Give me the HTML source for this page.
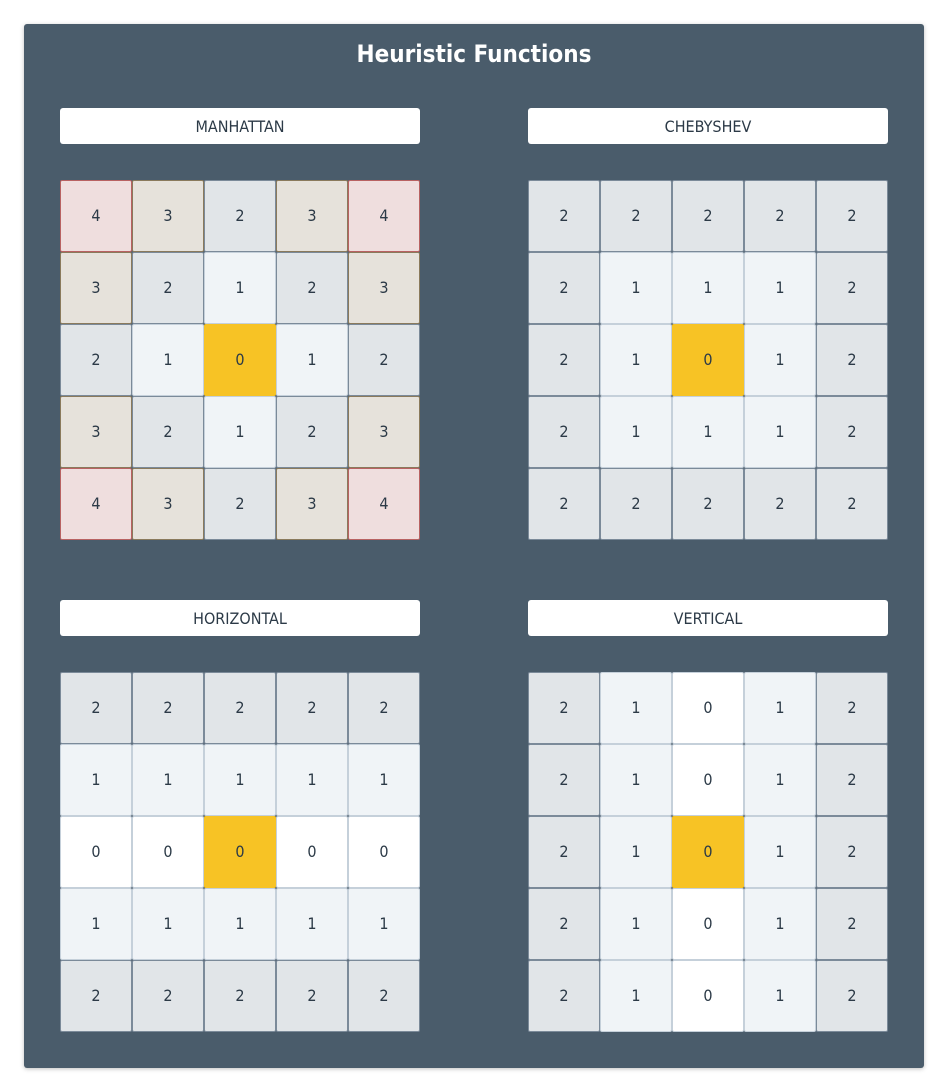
<!DOCTYPE html>
<html><head><meta charset="utf-8"><style>
body{margin:0;background:#fff;width:948px;height:1092px;position:relative;font-family:"DejaVu Sans Condensed","Liberation Sans",sans-serif;}
.panel{position:absolute;left:24px;top:24px;width:900px;height:1044px;background:#4a5c6b;border-radius:3px;box-shadow:0 1px 4px rgba(0,0,0,.25);}
h1{position:absolute;left:0;top:38px;width:948px;margin:0;text-align:center;color:#fff;font:bold 24px "DejaVu Sans Condensed","Liberation Sans",sans-serif;line-height:32px;z-index:2}
.lab{position:absolute;width:360px;height:36px;background:#fff;border-radius:3px;text-align:center;line-height:37px;font-size:16px;color:#2c3a47;}
.g{position:absolute;width:360px;height:360px;display:grid;grid-template-columns:repeat(5,72px);grid-template-rows:repeat(5,72px)}
.g div{box-sizing:border-box;border:1px solid #7b8a99;border-radius:2px;background:#e1e5e8;text-align:center;line-height:70px;font-size:16px;color:#2c3a47}
.g .a{background:#f0f4f7;border-color:#c5d0da}
.g .w{background:#fff;border-color:#c5d0da}
.g .y{background:#f7c325;border-color:#f7c325}
.g .c{background:#e6e2db;border-color:#8a7a5c}
.g .r{background:#efdede;border-color:#b86262}
</style></head><body>
<div class="panel"></div>
<h1>Heuristic Functions</h1>
<div class="lab" style="left:60px;top:108px">MANHATTAN</div>
<div class="lab" style="left:528px;top:108px">CHEBYSHEV</div>
<div class="lab" style="left:60px;top:600px">HORIZONTAL</div>
<div class="lab" style="left:528px;top:600px">VERTICAL</div>
<div class="g" style="left:60px;top:180px">
<div class="r">4</div><div class="c">3</div><div>2</div><div class="c">3</div><div class="r">4</div>
<div class="c">3</div><div>2</div><div class="a">1</div><div>2</div><div class="c">3</div>
<div>2</div><div class="a">1</div><div class="y">0</div><div class="a">1</div><div>2</div>
<div class="c">3</div><div>2</div><div class="a">1</div><div>2</div><div class="c">3</div>
<div class="r">4</div><div class="c">3</div><div>2</div><div class="c">3</div><div class="r">4</div>
</div>
<div class="g" style="left:528px;top:180px">
<div>2</div><div>2</div><div>2</div><div>2</div><div>2</div>
<div>2</div><div class="a">1</div><div class="a">1</div><div class="a">1</div><div>2</div>
<div>2</div><div class="a">1</div><div class="y">0</div><div class="a">1</div><div>2</div>
<div>2</div><div class="a">1</div><div class="a">1</div><div class="a">1</div><div>2</div>
<div>2</div><div>2</div><div>2</div><div>2</div><div>2</div>
</div>
<div class="g" style="left:60px;top:672px">
<div>2</div><div>2</div><div>2</div><div>2</div><div>2</div>
<div class="a">1</div><div class="a">1</div><div class="a">1</div><div class="a">1</div><div class="a">1</div>
<div class="w">0</div><div class="w">0</div><div class="y">0</div><div class="w">0</div><div class="w">0</div>
<div class="a">1</div><div class="a">1</div><div class="a">1</div><div class="a">1</div><div class="a">1</div>
<div>2</div><div>2</div><div>2</div><div>2</div><div>2</div>
</div>
<div class="g" style="left:528px;top:672px">
<div>2</div><div class="a">1</div><div class="w">0</div><div class="a">1</div><div>2</div>
<div>2</div><div class="a">1</div><div class="w">0</div><div class="a">1</div><div>2</div>
<div>2</div><div class="a">1</div><div class="y">0</div><div class="a">1</div><div>2</div>
<div>2</div><div class="a">1</div><div class="w">0</div><div class="a">1</div><div>2</div>
<div>2</div><div class="a">1</div><div class="w">0</div><div class="a">1</div><div>2</div>
</div>
</body></html>
